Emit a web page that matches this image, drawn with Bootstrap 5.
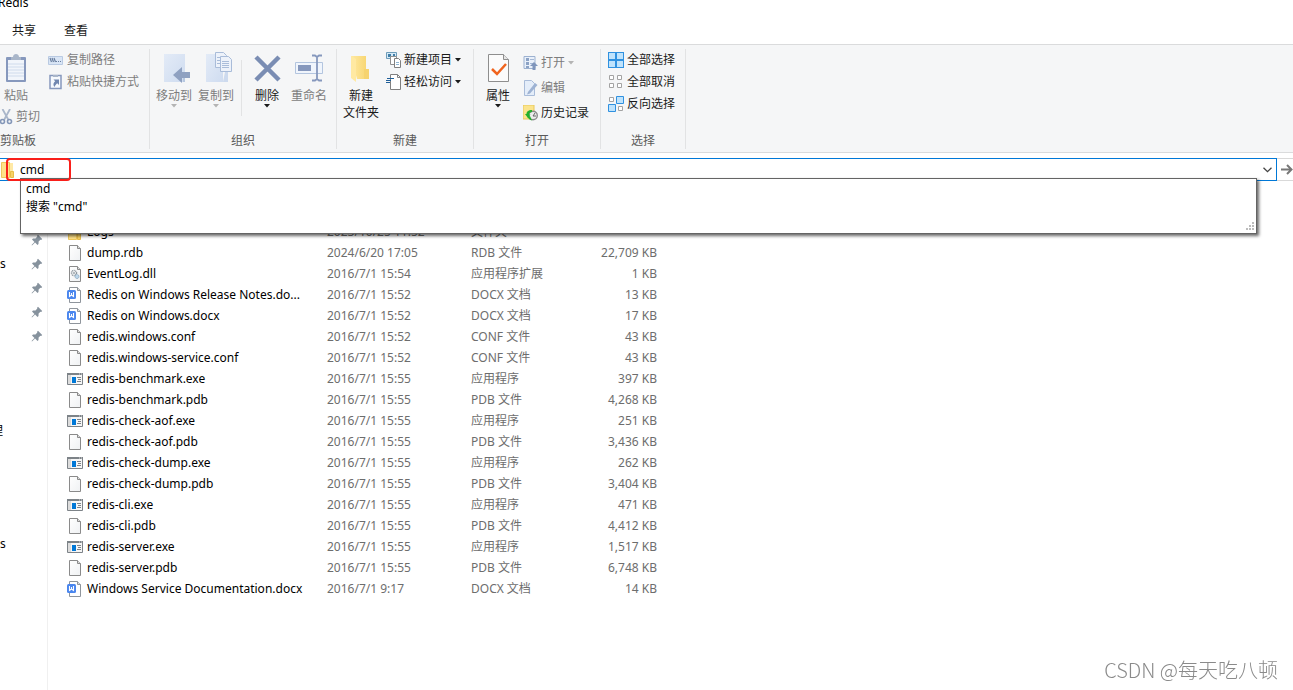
<!DOCTYPE html>
<html lang="zh-CN">
<head>
<meta charset="utf-8">
<meta name="viewport" content="width=device-width, initial-scale=1">
<title>Redis</title>
<link href="https://cdn.jsdelivr.net/npm/bootstrap@5.3.0/dist/css/bootstrap.min.css" rel="stylesheet">
<style>
  body { font-family: "Noto Sans", "Noto Sans CJK SC", sans-serif; font-size: 12px; line-height: 16px; color: #1a1a1a; background: #fff; }
  svg { display: block; flex: none; }
  .window { min-height: 100vh; overflow: hidden; }
  .titlebar { height: 14px; margin-left: -2px; overflow: hidden; font-size: 12px; color: #000; }
  .titlebar span { display: block; margin-top: -5px; }
  .tabs { height: 30px; padding-top: 3px; }
  .tabs .btn, .ribbon .btn { font-size: 12px; line-height: 16px; border: 0; padding: 0; border-radius: 0; color: #1a1a1a; }
  .ribbon { height: 109px; background: #f5f6f7; border-top: 1px solid #dadbdc; border-bottom: 1px solid #dadbdc; padding-top: 4px; }
  .group { height: 100px; border-right: 1px solid #e2e3e4; }
  .group-name { color: #5a5a5a; text-align: center; }
  .g-clip { width: 150px; } .g-org { width: 187px; } .g-new { width: 137px; } .g-open { width: 127px; } .g-sel { width: 85px; }
  .tools { display: flex; gap: 4px; padding-left: 3px; }
  .pair { display: flex; }
  .checks { padding-left: 7px; }
  .clip-left { width: 48px; }
  .ribbon .big { display: flex; flex-direction: column; align-items: center; padding-top: 3px; width: 42px; }
  .ribbon .big.slim { width: 32px; height: 57px; }
  .ribbon .big svg:first-child { margin-bottom: 4px; }
  .ribbon .big.tall svg:first-child { margin-bottom: 3px; }
  .ribbon .big, .ribbon .line { white-space: nowrap; }
  .ribbon .line { display: flex; align-items: center; gap: 3px; height: 22px; }
  .ribbon .faded { color: #7d7d7d; }
  .faded .arrow { color: #b4b4b4; }
  .loose { padding-top: 1px; }
  .ribbon .loose .line { height: 25px; }
  .two { line-height: 17px; }
  .divider { width: 1px; height: 56px; margin-top: 11px; background: #e2e3e4; }
  .address-row { margin-top: 5px; height: 23px; position: relative; z-index: 2; }
  .address { border: 1px solid #0078d7; border-left: 0; position: relative; }
  .address input { border: 0; outline: 0; padding: 0; font-size: 12px; line-height: 18px; color: #000; background: transparent; min-width: 0; }
  .go { width: 16px; border: 1px solid #d9d9d9; border-width: 1px 0; background: #fff; padding: 0; }
  .marker { position: absolute; z-index: 2; left: 6px; top: -1px; width: 65px; height: 23px; border: 2px solid #f91f1a; border-radius: 4px; pointer-events: none; }
  .suggest { position: absolute; left: 20px; right: 19px; top: 19px; height: 56px; background: #fff; border: 1px solid #646464; box-shadow: 2px 2px 3px rgba(0,0,0,.6); padding: 1px 5px; line-height: 18px; }
  .suggest a { color: #000; text-decoration: none; display: block; }
  .grip { position: absolute; right: 2px; bottom: 2px; }
  .side { width: 48px; border-right: 1px solid #f0f0f0; padding-top: 47px; color: #000; }
  .side li { height: 24px; display: flex; align-items: center; justify-content: space-between; padding-right: 4px; }
  .side .cut { width: 3px; display: flex; justify-content: flex-end; overflow: hidden; }
  .gap-a { margin-top: 71px; } .gap-b { margin-top: 89px; }
  .files { padding: 40px 0 0 19px; }
  .files table { width: 590px; table-layout: fixed; border-collapse: collapse; color: #6d6d6d; }
  .files td { height: 21px; padding: 0; white-space: nowrap; }
  .files td:first-child { color: #000; }
  .files .name { display: flex; align-items: center; gap: 4px; }
  .files td:last-child { text-align: right; }
  .watermark { position: fixed; right: 15px; bottom: 8px; font-family: "Noto Sans CJK SC", sans-serif; font-weight: 300; font-size: 20px; line-height: 24px; color: #8a8a8a; }
</style>
</head>
<body>
<svg width="0" height="0" class="position-absolute" aria-hidden="true">
  <defs>
    <linearGradient id="paper" x1="0" y1="0" x2="1" y2="1"><stop offset="0" stop-color="#fff"/><stop offset="1" stop-color="#eff1f3"/></linearGradient>
    <linearGradient id="fold" x1="0" y1="0" x2="1" y2="0"><stop offset="0" stop-color="#ffe9a2"/><stop offset="1" stop-color="#f8d775"/></linearGradient>
    <linearGradient id="blue" x1="0" y1="0" x2="1" y2="1"><stop offset="0" stop-color="#e3ebf7"/><stop offset="1" stop-color="#cfdcf0"/></linearGradient>
  </defs>
  <symbol id="doc" viewBox="0 0 16 16"><path d="M2.500.5h8l3 3v12h-11z" fill="url(#paper)" stroke="#8a8a8a"/><path d="M10.500.5v3h3" fill="#ddd" stroke="#8a8a8a"/></symbol>
  <symbol id="dll" viewBox="0 0 16 16"><use href="#doc"/><circle cx="7" cy="7" r="2.500" fill="none" stroke="#8b949c" stroke-width="1.500" stroke-dasharray="1 .6"/><circle cx="7" cy="7" r="1" fill="#9aa3aa"/><circle cx="10" cy="10.500" r="2" fill="#bcd7ec" stroke="#7f9fb8" stroke-dasharray="1 .6"/></symbol>
  <symbol id="docx" viewBox="0 0 16 16"><path d="M2.500.5h8l3 3v12h-11z" fill="#fff" stroke="#8f959c"/><path d="M10.500.5v3h3" fill="#ddd" stroke="#8f959c"/><rect x="0" y="3" width="9" height="9" rx="1.500" fill="#4a86ee"/><path d="M2.500 5v4.500L4.500 8l2 1.500V5M4.500 6v2" fill="none" stroke="#fff" stroke-width="1.100"/></symbol>
  <symbol id="exe" viewBox="0 0 16 16"><path d="M.5 2.500h15v11H.5z" fill="#f6f6f6" stroke="#7d8388"/><path d="M0 2h16v2H0z" fill="#7d8388"/><path d="M12 2.500h1v1h-1zM14 2.500h1v1h-1z" fill="#ddd"/><path d="M1 4h3v9H1z" fill="#dcdcdc"/><path d="M5 6h4v6H5z" fill="#0078d7"/><path d="M10 6.500h4M11 8.500h3M10 10.500h4" stroke="#7d8388"/></symbol>
  <symbol id="folder" viewBox="0 0 16 16"><path d="M1.500.5h8v15h-8z" fill="#ffe28a" stroke="#efc95d"/><path d="M10 1h3v9h-3z" fill="#ffe9a6"/><path d="M10.500 9.500h3v6h-3z" fill="#f7d266" stroke="#e8bd49"/></symbol>
  <symbol id="pin" viewBox="0 0 12 12"><path d="M7 .8 11.200 5l-1 .9-.8-.2L7.600 7.500 7.500 10l-1 1-2.400-2.500L1 11.400.6 11l2.900-3.100L1 5.500l1-1 2.500-.1 1.800-1.800L6.100 1.700z" fill="#86929d"/></symbol>
  <symbol id="down" viewBox="0 0 6 4"><path d="M0 0h6L3 3.500z" fill="currentColor"/></symbol>
</svg>

<main class="window d-flex flex-column">
  <header class="titlebar"><span>Redis</span></header>
  <nav class="tabs d-flex align-items-center gap-4 px-2">
    <button class="btn ms-1" type="button">共享</button>
    <button class="btn ms-1" type="button">查看</button>
  </nav>

  <section class="ribbon d-flex" aria-label="功能区">
    <div class="group g-clip d-flex flex-column justify-content-between">
      <div class="d-flex">
        <div class="clip-left">
          <button class="btn big slim faded" type="button">
            <svg width="32" height="32" viewBox="0 0 32 32"><rect x="6" y="5" width="20" height="25" rx="1" fill="#8698bd"/><path d="M8 8h16v20H8z" fill="#f1f5fb"/><path d="M8 12h16M8 15h16M8 18h16M8 21h16M8 24h16" stroke="#cfdbec"/><path d="M11 8V5h2c0-4 6-4 6 0h2v3z" fill="#a9b6c9"/></svg>
            粘贴</button>
          <button class="btn line faded" type="button">
            <svg width="13" height="16" viewBox="0 0 13 16"><path d="M2.500 0 8.500 11M10 0 4 11" stroke="#a9b6ca" stroke-width="1.800"/><circle cx="2.500" cy="12.500" r="2" fill="none" stroke="#8497b8" stroke-width="1.600"/><circle cx="9.500" cy="12.500" r="2" fill="none" stroke="#8497b8" stroke-width="1.600"/></svg>
            剪切</button>
        </div>
        <div>
          <button class="btn line faded" type="button">
            <svg width="16" height="16" viewBox="0 0 16 16"><path d="M.5 4.500h14v8H.5z" fill="#d9e5f5" stroke="#b9cae2"/><path d="m2 6 1.500 4M4 6l1.500 4M6 6l1.500 4" stroke="#6a7f9f" stroke-width="1.200"/><path d="M8 9h1v1H8zM10 9h1v1h-1zM12 9h1v1h-1z" fill="#6a7f9f"/></svg>
            复制路径</button>
          <button class="btn line faded" type="button">
            <svg width="16" height="16" viewBox="0 0 16 16"><path d="M2 1.500h11v13H2z" fill="#f6f9fd" stroke="#8698bd" stroke-width="1.500"/><path d="M5 3V1h5v2z" fill="#a9b6c9"/><path d="M5.500 5.500H11V11L9.300 9.300C8 10.200 7.200 11.500 6.500 13 4.500 10.500 5.800 8.500 7.200 7.300z" fill="#7187b0"/></svg>
            粘贴快捷方式</button>
        </div>
      </div>
      <div class="group-name text-start">剪贴板</div>
    </div>

    <div class="group g-org d-flex flex-column justify-content-between">
      <div class="tools">
        <div class="pair">
          <button class="btn big faded" type="button">
            <svg width="32" height="32" viewBox="0 0 32 32"><path d="M6 2h21v28H6z" fill="url(#blue)"/><path d="M25 24h2v6h-2z" fill="#b7c8e0"/><path d="m15 23 9-8v5h8v6h-8v5z" fill="#8fa1c1"/></svg>
            移动到<svg class="arrow" width="6" height="4"><use href="#down"/></svg></button>
          <button class="btn big faded" type="button">
            <svg width="32" height="32" viewBox="0 0 32 32"><path d="M6 2h17v28H6z" fill="url(#blue)"/><path d="M15.500.5h8l3 3v12h-11z" fill="#edf2fa" stroke="#a9bcd9"/><path d="M20.500 4.500h8l3 3v12h-11z" fill="#edf2fa" stroke="#a9bcd9"/><path d="M22 9.500h7M22 11.500h7M22 13.500h7M22 15.500h7M17 5.500h3M17 8.500h3M17 11.500h3" stroke="#a9bcd9"/><path d="M25 20h3v10h-5z" fill="#cddaee"/></svg>
            复制到<svg class="arrow" width="6" height="4"><use href="#down"/></svg></button>
        </div>
        <div class="divider"></div>
        <div class="pair">
          <button class="btn big" type="button">
            <svg width="32" height="32" viewBox="0 0 32 32"><path d="M5 5 28 28M28 5 5 28" stroke="#7a8db3" stroke-width="4.500"/></svg>
            删除<svg width="6" height="4"><use href="#down"/></svg></button>
          <button class="btn big faded" type="button">
            <svg width="32" height="32" viewBox="0 0 32 32"><path d="M2.500 10.500h27v11h-27z" fill="#f0f5fc" stroke="#b3c5df"/><path d="M5 13h13v6H5z" fill="#8698bd"/><path d="M19 3.500h3l2 1.500 2-1.500h3M24 5v22M19 28.500h3l2-1.500 2 1.500h3" fill="none" stroke="#8698bd" stroke-width="1.800"/></svg>
            重命名</button>
        </div>
      </div>
      <div class="group-name">组织</div>
    </div>

    <div class="group g-new d-flex flex-column justify-content-between">
      <div class="tools">
        <button class="btn big tall" type="button">
          <svg width="32" height="32" viewBox="0 0 32 32"><path d="M6 4h15v23h-9z" fill="url(#fold)"/><path d="M19 17h5v10h-5z" fill="#f6d36f"/><path d="m6 4 5 3v23l-5-4z" fill="#ffe9a2"/></svg>
          <span class="two">新建<br>文件夹</span></button>
        <div>
          <button class="btn line" type="button">
            <svg width="15" height="16" viewBox="0 0 15 16"><path d="M.5.5h10v6H.5z" fill="#d5e9f7" stroke="#6d9cb9"/><path d="M2 2h3v3H2zM7 2h2v2H7z" fill="#3f7ea8"/><path d="M4.500 4.500h6v8h-6z" fill="#fff" stroke="#909090"/><path d="M8.500 6.500h4l2 2v7h-6z" fill="#fff" stroke="#808080"/><path d="M10 10.500h3M10 12.500h3" stroke="#8fb4d0"/></svg>
            新建项目<svg width="6" height="4"><use href="#down"/></svg></button>
          <button class="btn line" type="button">
            <svg width="15" height="16" viewBox="0 0 15 16"><path d="M4.500.5h7l3 3v12h-10z" fill="#fff" stroke="#808080"/><path d="M11.500.5v3h3" fill="none" stroke="#808080"/><path d="M1 4.500h7M0 6.500h5M0 8.500h4" stroke="#1f5f99"/></svg>
            轻松访问<svg width="6" height="4"><use href="#down"/></svg></button>
        </div>
      </div>
      <div class="group-name">新建</div>
    </div>

    <div class="group g-open d-flex flex-column justify-content-between">
      <div class="tools">
        <button class="btn big" type="button">
          <svg width="32" height="32" viewBox="0 0 32 32"><path d="M6.500 2.500h15l5 5v22h-20z" fill="#fbfbfb" stroke="#8e8e8e"/><path d="M21.500 2.500v5h5" fill="#e6e6e6" stroke="#8e8e8e"/><path d="m10 17 5 5 9-10" fill="none" stroke="#f0641e" stroke-width="2.500"/></svg>
          属性<svg width="6" height="4"><use href="#down"/></svg></button>
        <div class="loose">
          <button class="btn line faded" type="button">
            <svg width="15" height="16" viewBox="0 0 15 16"><path d="M1 1.500h11v12H1z" fill="#e9f0fa" stroke="#9cb1d0"/><path d="M3 3h3v3H3zM3 7h3v3H3zM3 11h3v2H3z" fill="#8ba2c5"/><path d="M7 4.500h4M7 8.500h3" stroke="#a5b8d5"/><path d="m11 7 4 4h-2.500v4h-3v-4H7z" fill="#7f95bb"/></svg>
            打开<svg class="arrow" width="6" height="4"><use href="#down"/></svg></button>
          <button class="btn line faded" type="button">
            <svg width="15" height="16" viewBox="0 0 15 16"><path d="M1.500.5h7l3 3v12h-10z" fill="#e4edf9" stroke="#a9bcd9"/><path d="M5 12 12 3l2.500 2L7 13.500l-3 1z" fill="#9db2d3"/></svg>
            编辑</button>
          <button class="btn line" type="button">
            <svg width="15" height="16" viewBox="0 0 15 16"><path d="M0 0h11v14H0z" fill="#fbe48c" stroke="#e8c85c"/><circle cx="10" cy="10.500" r="4.300" fill="#ececec" stroke="#8b8b8b" stroke-width="1.400"/><path d="m12 8-2 3h3" fill="none" stroke="#666"/><path d="M9 5C5 5 3.500 7 3.500 9H2l3 4 2.500-3.500H6.200C6.200 8 7 7 9 7z" fill="#23b02c"/><path d="M4.500 12c1 2 2.500 3 4.500 3.500L7 11z" fill="#23b02c"/></svg>
            历史记录</button>
        </div>
      </div>
      <div class="group-name">打开</div>
    </div>

    <div class="group g-sel d-flex flex-column justify-content-between">
      <div class="checks">
        <button class="btn line" type="button">
          <svg width="16" height="16" viewBox="0 0 16 16"><path d="M0 0h16v16H0z" fill="#2f91e0"/><path d="M1 1h6v6H1zM9 1h6v6H9zM1 9h6v6H1zM9 9h6v6H9z" fill="#bfe3fc"/></svg>
          全部选择</button>
        <button class="btn line" type="button">
          <svg width="16" height="16" viewBox="0 0 16 16"><path d="M1.500 1.500h4v4h-4zM9.500 1.500h4v4h-4zM1.500 9.500h4v4h-4zM9.500 9.500h4v4h-4z" fill="#fff" stroke="#a3a3a3"/></svg>
          全部取消</button>
        <button class="btn line" type="button">
          <svg width="16" height="16" viewBox="0 0 16 16"><path d="M1.500 1.500h4v4h-4zM10.500 10.500h4v4h-4z" fill="#fff" stroke="#a3a3a3"/><path d="M8.500.5h7v7h-7zM.5 8.500h7v7h-7z" fill="#bfe3fc" stroke="#2f91e0"/></svg>
          反向选择</button>
      </div>
      <div class="group-name">选择</div>
    </div>
  </section>

  <div class="address-row d-flex">
    <div class="address d-flex flex-grow-1 align-items-center">
      <svg width="16" height="16"><use href="#folder"/></svg>
      <input class="flex-grow-1 ms-1" type="text" value="cmd" aria-label="地址">
      <svg class="me-1" width="9" height="6" viewBox="0 0 9 6"><path d="m.5.7 4 4 4-4" fill="none" stroke="#444" stroke-width="1.300"/></svg>
      <div class="marker"></div>
      <div class="suggest">
        <a href="#">cmd</a>
        <a href="#">搜索 "cmd"</a>
        <svg class="grip" width="9" height="9" viewBox="0 0 9 9"><path d="M7 0h2v2H7zM7 3h2v2H7zM7 6h2v2H7zM4 3h2v2H4zM4 6h2v2H4zM1 6h2v2H1z" fill="#bcbcbc"/></svg>
      </div>
    </div>
    <button class="go d-flex align-items-center justify-content-end" type="button" aria-label="转到">
      <svg width="12" height="11" viewBox="0 0 12 11"><path d="M0 5.500h10M6 1l4.500 4.500L6 10" fill="none" stroke="#777" stroke-width="2"/></svg>
    </button>
  </div>

  <div class="d-flex flex-grow-1">
    <aside class="side">
      <ul class="list-unstyled mb-0">
        <li><span></span><svg width="12" height="12"><use href="#pin"/></svg></li>
        <li><span>s</span><svg width="12" height="12"><use href="#pin"/></svg></li>
        <li><span></span><svg width="12" height="12"><use href="#pin"/></svg></li>
        <li><span></span><svg width="12" height="12"><use href="#pin"/></svg></li>
        <li><span></span><svg width="12" height="12"><use href="#pin"/></svg></li>
        <li class="gap-a"><span class="cut">理</span></li>
        <li class="gap-b"><span>s</span></li>
      </ul>
    </aside>
    <section class="files flex-grow-1">
      <table>
        <colgroup><col style="width:260px"><col style="width:144px"><col style="width:108px"><col></colgroup>
        <tbody>
          <tr><td><div class="name"><svg width="16" height="16"><use href="#folder"/></svg>Logs</div></td><td>2023/10/25 11:52</td><td>文件夹</td><td></td></tr>
          <tr><td><div class="name"><svg width="16" height="16"><use href="#doc"/></svg>dump.rdb</div></td><td>2024/6/20 17:05</td><td>RDB 文件</td><td>22,709 KB</td></tr>
          <tr><td><div class="name"><svg width="16" height="16"><use href="#dll"/></svg>EventLog.dll</div></td><td>2016/7/1 15:54</td><td>应用程序扩展</td><td>1 KB</td></tr>
          <tr><td><div class="name"><svg width="16" height="16"><use href="#docx"/></svg>Redis on Windows Release Notes.do...</div></td><td>2016/7/1 15:52</td><td>DOCX 文档</td><td>13 KB</td></tr>
          <tr><td><div class="name"><svg width="16" height="16"><use href="#docx"/></svg>Redis on Windows.docx</div></td><td>2016/7/1 15:52</td><td>DOCX 文档</td><td>17 KB</td></tr>
          <tr><td><div class="name"><svg width="16" height="16"><use href="#doc"/></svg>redis.windows.conf</div></td><td>2016/7/1 15:52</td><td>CONF 文件</td><td>43 KB</td></tr>
          <tr><td><div class="name"><svg width="16" height="16"><use href="#doc"/></svg>redis.windows-service.conf</div></td><td>2016/7/1 15:52</td><td>CONF 文件</td><td>43 KB</td></tr>
          <tr><td><div class="name"><svg width="16" height="16"><use href="#exe"/></svg>redis-benchmark.exe</div></td><td>2016/7/1 15:55</td><td>应用程序</td><td>397 KB</td></tr>
          <tr><td><div class="name"><svg width="16" height="16"><use href="#doc"/></svg>redis-benchmark.pdb</div></td><td>2016/7/1 15:55</td><td>PDB 文件</td><td>4,268 KB</td></tr>
          <tr><td><div class="name"><svg width="16" height="16"><use href="#exe"/></svg>redis-check-aof.exe</div></td><td>2016/7/1 15:55</td><td>应用程序</td><td>251 KB</td></tr>
          <tr><td><div class="name"><svg width="16" height="16"><use href="#doc"/></svg>redis-check-aof.pdb</div></td><td>2016/7/1 15:55</td><td>PDB 文件</td><td>3,436 KB</td></tr>
          <tr><td><div class="name"><svg width="16" height="16"><use href="#exe"/></svg>redis-check-dump.exe</div></td><td>2016/7/1 15:55</td><td>应用程序</td><td>262 KB</td></tr>
          <tr><td><div class="name"><svg width="16" height="16"><use href="#doc"/></svg>redis-check-dump.pdb</div></td><td>2016/7/1 15:55</td><td>PDB 文件</td><td>3,404 KB</td></tr>
          <tr><td><div class="name"><svg width="16" height="16"><use href="#exe"/></svg>redis-cli.exe</div></td><td>2016/7/1 15:55</td><td>应用程序</td><td>471 KB</td></tr>
          <tr><td><div class="name"><svg width="16" height="16"><use href="#doc"/></svg>redis-cli.pdb</div></td><td>2016/7/1 15:55</td><td>PDB 文件</td><td>4,412 KB</td></tr>
          <tr><td><div class="name"><svg width="16" height="16"><use href="#exe"/></svg>redis-server.exe</div></td><td>2016/7/1 15:55</td><td>应用程序</td><td>1,517 KB</td></tr>
          <tr><td><div class="name"><svg width="16" height="16"><use href="#doc"/></svg>redis-server.pdb</div></td><td>2016/7/1 15:55</td><td>PDB 文件</td><td>6,748 KB</td></tr>
          <tr><td><div class="name"><svg width="16" height="16"><use href="#docx"/></svg>Windows Service Documentation.docx</div></td><td>2016/7/1 9:17</td><td>DOCX 文档</td><td>14 KB</td></tr>
        </tbody>
      </table>
    </section>
  </div>
  <div class="watermark">CSDN @每天吃八顿</div>
</main>
<script src="https://cdn.jsdelivr.net/npm/bootstrap@5.3.0/dist/js/bootstrap.bundle.min.js"></script>
</body>
</html>
